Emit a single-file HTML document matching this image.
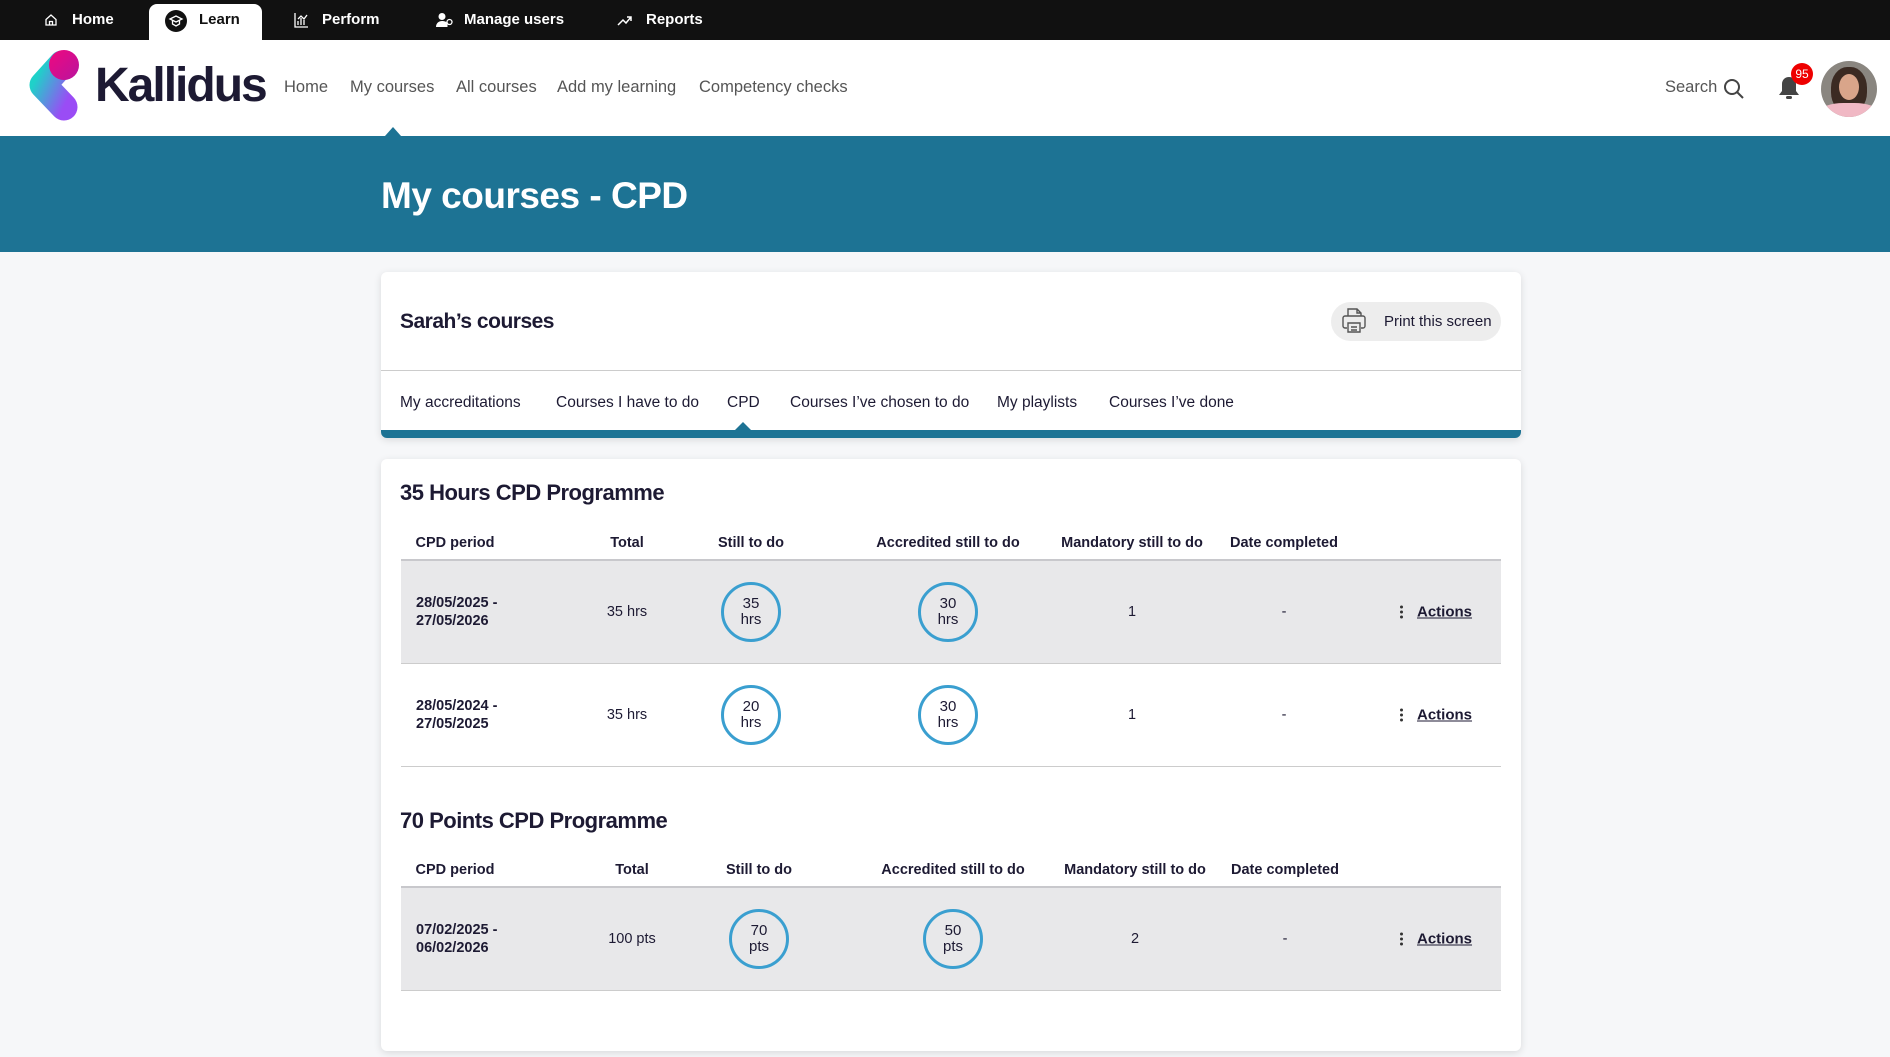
<!DOCTYPE html>
<html><head><meta charset="utf-8"><style>
*{box-sizing:border-box;margin:0;padding:0}
body{width:1890px;height:1057px;overflow:hidden;background:#f6f7f9;font-family:"Liberation Sans",sans-serif;color:#1d1a33;position:relative}
.abs{position:absolute;white-space:nowrap}
.top{position:absolute;left:0;top:0;width:1890px;height:40px;background:#111}
.ti{position:absolute;top:0;height:40px;line-height:40px;color:#fff;font-weight:bold;font-size:15px;white-space:nowrap}
.learn{position:absolute;left:149px;top:4px;width:113px;height:36px;background:#fff;border-radius:8px 8px 0 0}
.hdr{position:absolute;left:0;top:40px;width:1890px;height:96px;background:#fff}
.nav{position:absolute;top:78px;font-size:16.5px;color:#555}
.band{position:absolute;left:0;top:136px;width:1890px;height:116px;background:#1d7394}
.card{position:absolute;left:381px;width:1140px;background:#fff;border-radius:6px;box-shadow:0 2px 8px rgba(0,0,0,.12)}
.tab{position:absolute;top:394px;font-size:15.5px;color:#1d1a33}
.th{position:absolute;font-size:14.5px;font-weight:bold;transform:translateX(-50%)}
.row{position:absolute;left:401px;width:1100px;border-bottom:1px solid #ccc}
.c{position:absolute;width:60px;height:60px;border:3.5px solid #3a9fd0;border-radius:50%;text-align:center;font-size:15px;line-height:16px;padding-top:11px;transform:translate(-50%,-50%)}
.t{position:absolute;font-size:14.5px;transform:translate(-50%,-50%)}
.d{position:absolute;font-size:14.5px;font-weight:bold;line-height:18px;transform:translateY(-50%)}
.act{position:absolute;font-size:15px;font-weight:bold;text-decoration:underline;transform:translateY(-50%)}
.dots{position:absolute;width:3px;transform:translateY(-50%)}
.dots i{display:block;width:3px;height:3px;background:#333;border-radius:50%;margin:2px 0}
</style></head><body>
<div class="top"></div>
<div class="learn"></div>
<svg class="abs" style="left:44px;top:13px" width="14" height="14" viewBox="0 0 14 14" fill="none" stroke="#fff" stroke-width="1.3"><path d="M2 6.5L7 2l5 4.5V12H2z M5.5 12V8.5h3V12"/></svg>
<div class="ti" style="left:72px">Home</div>
<svg class="abs" style="left:165px;top:10px" width="22" height="22" viewBox="0 0 22 22"><circle cx="11" cy="11" r="11" fill="#111"/><path d="M5 9l6-3 6 3-6 3z M7.5 10.5v3.5l3.5 2 3.5-2v-3.5" stroke="#fff" stroke-width="1.3" fill="none"/></svg>
<div class="abs" style="left:199px;top:0;line-height:40px;font-weight:bold;font-size:15px;color:#111">Learn</div>
<svg class="abs" style="left:293px;top:12px" width="16" height="16" viewBox="0 0 16 16" fill="none" stroke="#fff" stroke-width="1.3"><path d="M2 1v14h13 M5 13V9 M8 13V6 M11 13V8 M5 7l3-3 3 3 3-4"/></svg>
<div class="ti" style="left:322px">Perform</div>
<svg class="abs" style="left:436px;top:12px" width="18" height="16" viewBox="0 0 18 16" fill="#fff"><circle cx="6" cy="4.5" r="3.5"/><path d="M0 15c0-4 3-6 6-6s5 1 5.5 3V15z"/><circle cx="13.5" cy="10" r="2.5" fill="none" stroke="#fff" stroke-width="1.3"/></svg>
<div class="ti" style="left:464px">Manage users</div>
<svg class="abs" style="left:617px;top:14px" width="16" height="12" viewBox="0 0 16 12" fill="none" stroke="#fff" stroke-width="1.5"><path d="M1 11l5-5 3 3 5-6 M10 3h4v4"/></svg>
<div class="ti" style="left:646px">Reports</div>

<div class="hdr"></div>
<svg class="abs" style="left:26px;top:48px" width="60" height="80" viewBox="26 48 60 80">
<defs><linearGradient id="g" x1="0" y1="0" x2="1" y2="1"><stop offset="0" stop-color="#1fd1c9"/><stop offset="1" stop-color="#9a4cf5"/></linearGradient>
<linearGradient id="p" x1="0" y1="0" x2="1" y2="1"><stop offset="0" stop-color="#f0087e"/><stop offset="1" stop-color="#b8149e"/></linearGradient></defs>
<path d="M62 64L43 85L64 107" stroke="url(#g)" stroke-width="27" stroke-linecap="round" stroke-linejoin="round" fill="none"/>
<circle cx="64" cy="65" r="15" fill="url(#p)"/>
</svg>
<div class="abs" style="left:95px;top:58px;font-size:48px;font-weight:bold;color:#1d1a33;letter-spacing:-2px">Kallidus</div>
<div class="nav abs" style="left:284px">Home</div>
<div class="nav abs" style="left:350px">My courses</div>
<div class="nav abs" style="left:456px">All courses</div>
<div class="nav abs" style="left:557px">Add my learning</div>
<div class="nav abs" style="left:699px">Competency checks</div>
<div class="abs" style="left:385px;top:127px;width:0;height:0;border-left:8px solid transparent;border-right:8px solid transparent;border-bottom:9px solid #1d7394"></div>
<div class="nav abs" style="left:1665px">Search</div>
<svg class="abs" style="left:1723px;top:78px" width="22" height="22" viewBox="0 0 22 22" fill="none" stroke="#444" stroke-width="2"><circle cx="9" cy="9" r="7"/><path d="M14 14l6 6"/></svg>
<svg class="abs" style="left:1777px;top:75px" width="24" height="26" viewBox="0 0 24 26" fill="#444"><path d="M12 2c-4 0-7 3-7 7v7l-3 4h20l-3-4V9c0-4-3-7-7-7z"/><rect x="9" y="21" width="6" height="3" rx="1.5"/></svg>
<div class="abs" style="left:1791px;top:63px;width:22px;height:22px;border-radius:50%;background:#e00;color:#fff;font-size:12px;text-align:center;line-height:22px">95</div>
<div class="abs" style="left:1821px;top:61px;width:56px;height:56px;border-radius:50%;background:#8a8680;overflow:hidden">
<div style="position:absolute;left:10px;top:6px;width:36px;height:46px;border-radius:45%;background:#3b2a22"></div>
<div style="position:absolute;left:0;top:42px;width:56px;height:20px;border-radius:40% 40% 0 0;background:#f0b8c4"></div>
<div style="position:absolute;left:18px;top:13px;width:20px;height:26px;border-radius:50%;background:#d9a58a"></div></div>

<div class="band"></div>
<div class="abs" style="left:381px;top:175px;font-size:37px;font-weight:bold;color:#fff;letter-spacing:-0.5px">My courses - CPD</div>

<div class="card" style="top:272px;height:166px;overflow:hidden">
<div style="position:absolute;left:0;top:98px;width:1140px;height:1px;background:#ccc"></div>
<div style="position:absolute;left:0;bottom:0;width:1140px;height:8px;background:#1d7394"></div>
</div>
<div class="abs" style="left:400px;top:310px;font-size:21px;font-weight:bold;letter-spacing:-0.5px">Sarah’s courses</div>
<div class="abs" style="left:1331px;top:302px;width:170px;height:39px;border-radius:20px;background:#ededed"></div>
<svg class="abs" style="left:1340px;top:306px" width="28" height="30" viewBox="0 0 28 30" fill="none" stroke="#555" stroke-width="1.4"><path d="M8 10V3h9l4 4v3 M17 3v4h4 M5 10h18a2 2 0 012 2v8a2 2 0 01-2 2h-2 M7 22H5a2 2 0 01-2-2v-8a2 2 0 012-2 M8 17h12v9H8z M11 21h6 M11 24h6"/></svg>
<div class="abs" style="left:1384px;top:313px;font-size:15px">Print this screen</div>
<div class="tab abs" style="left:400px">My accreditations</div>
<div class="tab abs" style="left:556px">Courses I have to do</div>
<div class="tab abs" style="left:727px">CPD</div>
<div class="tab abs" style="left:790px">Courses I’ve chosen to do</div>
<div class="tab abs" style="left:997px">My playlists</div>
<div class="tab abs" style="left:1109px">Courses I’ve done</div>
<div class="abs" style="left:735px;top:422px;width:0;height:0;border-left:8px solid transparent;border-right:8px solid transparent;border-bottom:8px solid #1d7394"></div>

<div class="card" style="top:459px;height:592px"></div>
<div class="abs" style="left:400px;top:480px;font-size:22px;font-weight:bold;letter-spacing:-0.5px">35 Hours CPD Programme</div>
<div class="th" style="left:455px;top:535px">CPD period</div>
<div class="th" style="left:627px;top:535px">Total</div>
<div class="th" style="left:751px;top:535px">Still to do</div>
<div class="th" style="left:948px;top:535px">Accredited still to do</div>
<div class="th" style="left:1132px;top:535px">Mandatory still to do</div>
<div class="th" style="left:1284px;top:535px">Date completed</div>
<div class="row" style="top:559px;height:1px;border-bottom:2px solid #c8c8cc"></div>
<div class="row" style="top:561px;height:103px;background:#e8e8ea"></div>
<div class="row" style="top:664px;height:103px"></div>

<div class="d" style="left:416px;top:612px">28/05/2025 -<br>27/05/2026</div>
<div class="t" style="left:627px;top:612px">35 hrs</div>
<div class="c" style="left:751px;top:612px">35<br>hrs</div>
<div class="c" style="left:948px;top:612px">30<br>hrs</div>
<div class="t" style="left:1132px;top:612px">1</div>
<div class="t" style="left:1284px;top:612px">-</div>
<div class="dots" style="left:1400px;top:612px"><i></i><i></i><i></i></div>
<div class="act" style="left:1417px;top:612px">Actions</div>

<div class="d" style="left:416px;top:715px">28/05/2024 -<br>27/05/2025</div>
<div class="t" style="left:627px;top:715px">35 hrs</div>
<div class="c" style="left:751px;top:715px">20<br>hrs</div>
<div class="c" style="left:948px;top:715px">30<br>hrs</div>
<div class="t" style="left:1132px;top:715px">1</div>
<div class="t" style="left:1284px;top:715px">-</div>
<div class="dots" style="left:1400px;top:715px"><i></i><i></i><i></i></div>
<div class="act" style="left:1417px;top:715px">Actions</div>

<div class="abs" style="left:400px;top:808px;font-size:22px;font-weight:bold;letter-spacing:-0.5px">70 Points CPD Programme</div>
<div class="th" style="left:455px;top:862px">CPD period</div>
<div class="th" style="left:632px;top:862px">Total</div>
<div class="th" style="left:759px;top:862px">Still to do</div>
<div class="th" style="left:953px;top:862px">Accredited still to do</div>
<div class="th" style="left:1135px;top:862px">Mandatory still to do</div>
<div class="th" style="left:1285px;top:862px">Date completed</div>
<div class="row" style="top:886px;height:1px;border-bottom:2px solid #c8c8cc"></div>
<div class="row" style="top:888px;height:103px;background:#e8e8ea"></div>
<div class="d" style="left:416px;top:939px">07/02/2025 -<br>06/02/2026</div>
<div class="t" style="left:632px;top:939px">100 pts</div>
<div class="c" style="left:759px;top:939px">70<br>pts</div>
<div class="c" style="left:953px;top:939px">50<br>pts</div>
<div class="t" style="left:1135px;top:939px">2</div>
<div class="t" style="left:1285px;top:939px">-</div>
<div class="dots" style="left:1400px;top:939px"><i></i><i></i><i></i></div>
<div class="act" style="left:1417px;top:939px">Actions</div>
</body></html>
